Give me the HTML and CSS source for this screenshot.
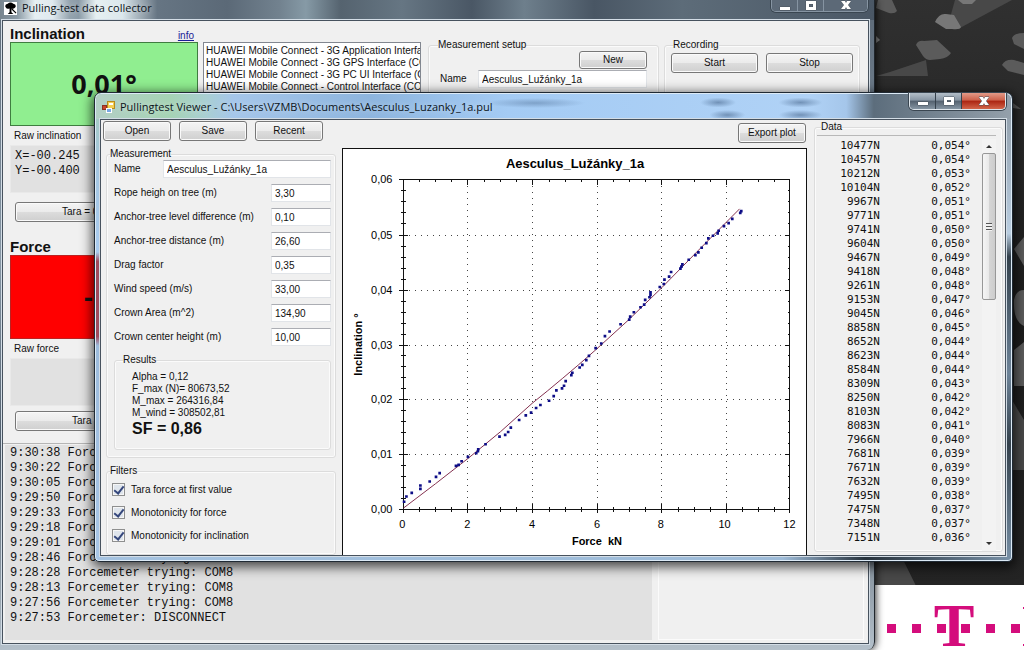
FILE: index.html
```html
<!DOCTYPE html>
<html lang="en">
<head>
<meta charset="utf-8">
<title>Pullingtest Viewer</title>
<link rel="stylesheet" href="styles.css">
</head>
<body>
<main class="desktop">
  <svg class="wallpaper" viewBox="864 0 160 650" preserveAspectRatio="xMaxYMin slice" aria-hidden="true">
    <defs><linearGradient id="night" x1="0" y1="0" x2="0" y2="1"><stop offset="0" stop-color="#303030"/><stop offset=".5" stop-color="#1c1c1c"/><stop offset=".9" stop-color="#242424"/></linearGradient></defs>
    <rect x="864" width="160" height="650" fill="url(#night)"/>
    <g fill="#484848"><path d="M950 18L955 0H1012L958 29zM890 72L926 60L928 76H876zM864 480L917 588H864zM1012 400L1024 420V470H1008z"/></g>
    <g fill="#5b5b5b">
      <path d="M878 0H892L897 11Q895 14 889 13L876 8zM916 45Q918 40 924 41L937 40L951 53Q948 58 940 59L930 60Q926 60 923 56zM1012 38Q1014 33 1024 33V49L1014 44zM1002 65Q1005 59 1014 60L1024 63V75L1008 71zM1013 103L1021 109L1013 108zM1014 249L1024 237V266zM1014 300Q1016 290 1024 290V326Q1013 321 1014 300zM1014 350L1024 342V386H1014z"/>
      <path fill="#777" d="M935 22Q939 13 946 14L954 15L961 27Q960 30 952 29L946 29zM958 0H976L972 4H963zM876 36L880 40L876 43z"/>
    </g>
    <rect x="864" y="585" width="160" height="65" fill="#fff"/>
    <g fill="#d40d7c"><path d="M887 624h9v9h-9zM912 624h9v9h-9zM937 624h9v9h-9zM961 624h9v9h-9zM986 624h9v9h-9zM1011 624h9v9h-9z"/>
    <text class="brand" x="954" y="646" text-anchor="middle">T</text><path d="M1023 607h1v2h-1zM1023 644h1v2h-1z"/></g>
  </svg>

  <section class="window collector" aria-label="Pulling-test data collector">
    <header class="titlebar">
      <svg class="appicon" viewBox="0 0 14 14" aria-hidden="true"><rect width="14" height="14" fill="#fff"/><path fill="#000" d="M2 6Q0 3 4 2Q7-1 10 2Q14 3 12 6Q10 8 8 7V11L10 13H4L6 11V7Q3 8 2 6z"/><path d="M8 7L13 12" stroke="#000" stroke-width="1.2"/></svg>
      <h1 class="caption">Pulling-test data collector</h1>
      <div class="winbuttons dim">
        <button aria-label="Minimize"><svg viewBox="0 0 14 12"><path class="glyph" d="M2 7h10v3H2z"/></svg></button>
        <button aria-label="Maximize"><svg viewBox="0 0 14 12"><path class="glyph" fill-rule="evenodd" d="M2 1h10v9H2zM5 4v3h4V4z"/></svg></button>
        <button class="wide" aria-label="Close"><svg viewBox="0 0 14 12"><path class="glyph" d="M2 1h4l1 2 1-2h4L9 5l3 4H8L7 7l-1 2H2l3-4z"/></svg></button>
      </div>
    </header>
    <div class="client">
      <div class="upper">
        <div class="sensors">
          <div class="sensorhead"><h2>Inclination</h2><a href="#info">info</a></div>
          <output class="reading ok">0,01°</output>
          <p class="rawlabel">Raw inclination</p>
          <pre class="raw">X=-00.245
Y=-00.400</pre>
          <button class="btn tara">Tara = 0</button>
          <div class="sensorhead second"><h2>Force</h2></div>
          <output class="reading bad">- - -</output>
          <p class="rawlabel">Raw force</p>
          <pre class="raw"></pre>
          <button class="btn tara force">Tara = 0</button>
        </div>
        <ul class="ports">
          <li>HUAWEI Mobile Connect - 3G Application Interface</li>
          <li>HUAWEI Mobile Connect - 3G GPS Interface (COM5)</li>
          <li>HUAWEI Mobile Connect - 3G PC UI Interface (COM6)</li>
          <li>HUAWEI Mobile Connect - Control Interface (COM7)</li>
        </ul>
        <fieldset class="setup"><legend>Measurement setup</legend>
          <button class="btn new">New</button>
          <div class="namerow"><label for="setupname">Name</label><input id="setupname" value="Aesculus_Lužánky_1a"></div>
        </fieldset>
        <fieldset class="recording"><legend>Recording</legend>
          <div class="pair"><button class="btn">Start</button><button class="btn">Stop</button></div>
        </fieldset>
      </div>
      <div class="lower">
        <pre class="log">9:30:38 Forcemeter trying: COM8
9:30:22 Forcemeter trying: COM8
9:30:05 Forcemeter trying: COM8
9:29:50 Forcemeter trying: COM8
9:29:33 Forcemeter trying: COM8
9:29:18 Forcemeter trying: COM8
9:29:01 Forcemeter trying: COM8
9:28:46 Forcemeter trying: COM8
9:28:28 Forcemeter trying: COM8
9:28:13 Forcemeter trying: COM8
9:27:56 Forcemeter trying: COM8
9:27:53 Forcemeter: DISCONNECT</pre>
        <div class="side"></div>
      </div>
    </div>
  </section>

  <section class="window viewer" aria-label="Pullingtest Viewer">
    <header class="titlebar">
      <svg class="appicon" viewBox="0 0 13 13" aria-hidden="true"><rect x="5.500" y="1.500" width="7" height="7" fill="#f5cf52" stroke="#b88a1c"/><path fill="#fff" d="M7 3h4v2H7z"/><rect x=".5" y="5.500" width="4" height="4" fill="#c8442c" stroke="#8c3022"/><rect x="4.500" y="8.500" width="5" height="4" fill="#78a7e4" stroke="#fff"/></svg>
      <h1 class="caption">Pullingtest Viewer - C:\Users\VZMB\Documents\Aesculus_Luzanky_1a.pul</h1>
      <div class="winbuttons">
        <button aria-label="Minimize"><svg viewBox="0 0 14 12"><path class="glyph" d="M2 7h10v3H2z"/></svg></button>
        <button aria-label="Maximize"><svg viewBox="0 0 14 12"><path class="glyph" fill-rule="evenodd" d="M2 2h10v8H2zM5 5v2h4V5z"/></svg></button>
        <button class="wide close" aria-label="Close"><svg viewBox="0 0 14 12"><path class="glyph" d="M2 2h4l1 2 1-2h4L9 6l3 4H8L7 8l-1 2H2l3-4z"/></svg></button>
      </div>
    </header>
    <div class="client body">
      <div class="toolbar">
        <button class="btn">Open</button><button class="btn">Save</button><button class="btn">Recent</button>
        <button class="btn export">Export plot</button>
      </div>
      <form class="params">
        <fieldset class="measurement"><legend>Measurement</legend>
          <div class="field name"><label for="name">Name</label><input id="name" value="Aesculus_Lužánky_1a"></div>
          <div class="field"><label for="rope">Rope heigh on tree (m)</label><input id="rope" value="3,30"></div>
          <div class="field"><label for="level">Anchor-tree level difference (m)</label><input id="level" value="0,10"></div>
          <div class="field"><label for="dist">Anchor-tree distance (m)</label><input id="dist" value="26,60"></div>
          <div class="field"><label for="drag">Drag factor</label><input id="drag" value="0,35"></div>
          <div class="field"><label for="wind">Wind speed (m/s)</label><input id="wind" value="33,00"></div>
          <div class="field"><label for="area">Crown Area (m^2)</label><input id="area" value="134,90"></div>
          <div class="field"><label for="height">Crown center height (m)</label><input id="height" value="10,00"></div>
          <fieldset class="results"><legend>Results</legend>
            <p>Alpha = 0,12</p><p>F_max (N)= 80673,52</p><p>M_max = 264316,84</p><p>M_wind = 308502,81</p>
            <p class="sf">SF = 0,86</p>
          </fieldset>
        </fieldset>
        <fieldset class="filters"><legend>Filters</legend>
          <label><input type="checkbox" checked>Tara force at first value</label>
          <label><input type="checkbox" checked>Monotonicity for force</label>
          <label><input type="checkbox" checked>Monotonicity for inclination</label>
        </fieldset>
      </form>
      <figure class="plot">
        <svg viewBox="343 148 463 407" preserveAspectRatio="xMidYMin meet" role="img" aria-label="Inclination against force">
          <g class="grid"><path d="M467.500 179V509M532.500 179V509M597.500 179V509M661.500 179V509M726.500 179V509"/><path d="M403 234.500H790M403 289.500H790M403 344.500H790M403 399.500H790M403 454.500H790"/></g>
          <g class="axis">
            <rect x="403.500" y="178.500" width="387" height="331"/>
            <path d="M399 178.500h9M399 234.500h9M399 289.500h9M399 344.500h9M399 399.500h9M399 454.500h9M399 509.500h9M467.500 504v9M532.500 504v9M597.500 504v9M661.500 504v9M726.500 504v9M403.500 504v9M790.500 504v9M467.500 179v5M532.500 179v5M597.500 179v5M661.500 179v5M726.500 179v5M786 234.500h5M786 289.500h5M786 344.500h5M786 399.500h5M786 454.500h5"/>
            <path d="M401 189.500h5M401 200.500h5M401 211.500h5M401 222.500h5M401 245.500h5M401 256.500h5M401 267.500h5M401 278.500h5M401 300.500h5M401 311.500h5M401 322.500h5M401 333.500h5M401 355.500h5M401 366.500h5M401 377.500h5M401 388.500h5M401 410.500h5M401 421.500h5M401 432.500h5M401 443.500h5M401 465.500h5M401 476.500h5M401 487.500h5M401 498.500h5"/>
            <path d="M789 189.500h2M789 200.500h2M789 211.500h2M789 222.500h2M789 245.500h2M789 256.500h2M789 267.500h2M789 278.500h2M789 300.500h2M789 311.500h2M789 322.500h2M789 333.500h2M789 355.500h2M789 366.500h2M789 377.500h2M789 388.500h2M789 410.500h2M789 421.500h2M789 432.500h2M789 443.500h2M789 465.500h2M789 476.500h2M789 487.500h2M789 498.500h2"/>
            <path d="M419.500 507v5M435.500 507v5M451.500 507v5M484.500 507v5M500.500 507v5M516.500 507v5M549.500 507v5M565.500 507v5M581.500 507v5M613.500 507v5M629.500 507v5M645.500 507v5M678.500 507v5M694.500 507v5M710.500 507v5M742.500 507v5M758.500 507v5M774.500 507v5"/>
            <path d="M419.500 179v2M435.500 179v2M451.500 179v2M484.500 179v2M500.500 179v2M516.500 179v2M549.500 179v2M565.500 179v2M581.500 179v2M613.500 179v2M629.500 179v2M645.500 179v2M678.500 179v2M694.500 179v2M710.500 179v2M742.500 179v2M758.500 179v2M774.500 179v2"/>
          </g>
          <path class="fit" d="M403 508Q435 484 468 458T532 403Q562 379 595 350T662 287Q700 248 740 208"/>
          <g class="dots">
            <path transform="translate(340 350) scale(.3333)" d="M191 455h.1M198 439h.1M214 428h.1M240 406h.1M240 416h.1M268 394h.1M287 380h.1M298 369h.1M347 347h.1M355 344h.1M364 333h.1M383 320h.1M408 309h.1M413 303h.1M414 297h.1M436 282h.1M478 259h.1M495 254h.1M504 245h.1M512 232h.1M537 209h.1M557 195h.1M573 187h.1M588 173h.1M601 164h.1M627 151h.1M641 137h.1M649 120h.1M666 114h.1M672 106h.1M677 92h.1M694 74h.1M697 67h.1M719 51h.1M727 43h.1M739 29h.1M747 16h.1"/>
            <path transform="translate(570 140) scale(.3333)" d="M77 623h.1M94 609h.1M105 587h.1M119 573h.1M152 551h.1M178 537h.1M181 528h.1M192 515h.1M212 500h.1M223 492h.1M226 478h.1M239 470h.1M242 463h.1M242 455h.1M270 439h.1M282 430h.1M284 417h.1M298 408h.1M304 394h.1M332 384h.1M335 378h.1M338 371h.1M357 357h.1M377 343h.1M386 335h.1M396 321h.1M410 307h.1M416 293h.1M430 285h.1M444 278h.1M447 270h.1M463 256h.1M477 247h.1M488 234h.1M512 216h.1M515 211h.1"/>
          </g>
          <g class="ticks end"><text x="392" y="182">0,06</text><text x="392" y="238">0,05</text><text x="392" y="293">0,04</text><text x="392" y="348">0,03</text><text x="392" y="403">0,02</text><text x="392" y="458">0,01</text><text x="392" y="513">0,00</text></g>
          <g class="ticks mid"><text x="402" y="528">0</text><text x="467" y="528">2</text><text x="532" y="528">4</text><text x="597" y="528">6</text><text x="661" y="528">8</text><text x="725" y="528">10</text><text x="790" y="528">12</text></g>
          <text class="plottitle" x="575" y="167">Aesculus_Lužánky_1a</text>
          <text class="axistitle" x="597" y="545" xml:space="preserve">Force  kN</text>
          <text class="axistitle" transform="translate(361 344) rotate(-90)">Inclination °</text>
        </svg>
      </figure>
      <fieldset class="data"><legend>Data</legend>
        <div class="list">
          <table>
            <tr><td>10477N</td><td>0,054°</td></tr><tr><td>10457N</td><td>0,054°</td></tr><tr><td>10212N</td><td>0,053°</td></tr><tr><td>10104N</td><td>0,052°</td></tr><tr><td>9967N</td><td>0,051°</td></tr><tr><td>9771N</td><td>0,051°</td></tr><tr><td>9741N</td><td>0,050°</td></tr><tr><td>9604N</td><td>0,050°</td></tr><tr><td>9467N</td><td>0,049°</td></tr><tr><td>9418N</td><td>0,048°</td></tr><tr><td>9261N</td><td>0,048°</td></tr><tr><td>9153N</td><td>0,047°</td></tr><tr><td>9045N</td><td>0,046°</td></tr><tr><td>8858N</td><td>0,045°</td></tr><tr><td>8652N</td><td>0,044°</td></tr><tr><td>8623N</td><td>0,044°</td></tr><tr><td>8584N</td><td>0,044°</td></tr><tr><td>8309N</td><td>0,043°</td></tr><tr><td>8250N</td><td>0,042°</td></tr><tr><td>8103N</td><td>0,042°</td></tr><tr><td>8083N</td><td>0,041°</td></tr><tr><td>7966N</td><td>0,040°</td></tr><tr><td>7681N</td><td>0,039°</td></tr><tr><td>7671N</td><td>0,039°</td></tr><tr><td>7632N</td><td>0,039°</td></tr><tr><td>7495N</td><td>0,038°</td></tr><tr><td>7475N</td><td>0,037°</td></tr><tr><td>7348N</td><td>0,037°</td></tr><tr><td>7151N</td><td>0,036°</td></tr>
          </table>
          <div class="scroll" aria-hidden="true">
            <svg class="arrow" viewBox="0 0 14 14"><path d="M4 9L7 6L10 9z"/></svg>
            <div class="thumb"><i></i></div>
            <svg class="arrow" viewBox="0 0 14 14"><path d="M4 5L7 8L10 5z"/></svg>
          </div>
        </div>
      </fieldset>
    </div>
  </section>
</main>
</body>
</html>
```
FILE: styles.css
```css
* { box-sizing: border-box; }
body { margin: 0; font: 10px/12px "Liberation Sans", Arial, sans-serif; color: #111; }
h1, h2, p, pre, figure, ul { margin: 0; padding: 0; }
button, input { font: inherit; color: inherit; }
.desktop { position: relative; min-height: 100vh; overflow: hidden; background: #222; }
.wallpaper { position: absolute; top: 0; right: 0; width: 160px; height: 100%; }
.brand { font: bold 61px "Liberation Serif", serif; }

.window { position: absolute; display: flex; flex-direction: column; }
.titlebar { display: flex; align-items: center; flex: none; }
.caption { flex: 1; font: 11px/16px "Open Sans", "Noto Sans", sans-serif; color: #0c1420; text-shadow: 0 0 6px #ffffff90; }
.appicon { width: 13px; height: 13px; margin-right: 5px; }
.client { flex: 1; min-height: 0; background: #f0f0f0; border: 1px solid #47525e; outline: 1px solid #d3dde6; }

.winbuttons { display: flex; align-self: flex-start; border: 1px solid #dfe6ec; border-top: 0; border-radius: 0 0 5px 5px; overflow: hidden; box-shadow: 0 0 0 1px #3a4651; }
.winbuttons button { display: grid; place-items: center; width: 26px; height: 16px; padding: 0; border: 0; border-right: 1px solid #35414c; background: linear-gradient(#b3bec8, #8795a3 45%, #53616f 50%, #8595a3); }
.winbuttons .wide { width: 43px; border-right: 0; }
.winbuttons .close { background: linear-gradient(#e29a88, #cc604a 45%, #ab2411 50%, #d2654a); }
.winbuttons svg { width: 14px; height: 12px; }
.glyph { fill: #fff; stroke: #4b555f; stroke-width: 1; paint-order: stroke; }
.winbuttons.dim { border-color: #8694a2; }
.winbuttons.dim button { height: 11px; background: #5c6977; border-color: #8694a2; }

.btn { height: 20px; padding: 0 4px; border: 1px solid #777; border-radius: 3px; background: linear-gradient(#f4f4f4, #ebebeb 48%, #dcdcdc 52%, #cfcfcf); box-shadow: inset 0 0 0 1px #fafafa; line-height: 16px; }
fieldset { min-width: 0; margin: 0; padding: 0; border: 1px solid #dcdcdc; border-radius: 3px; box-shadow: inset 0 0 0 1px #fbfbfb; }
legend { height: 12px; margin-left: 4px; padding: 0; background: #f0f0f0; }
input:not([type]) { min-width: 0; height: 18px; padding: 0 3px; border: 1px solid #e1e4e8; border-top-color: #abadb3; background: #fff; }

.collector { left: 0; top: 0; right: 149px; bottom: 0; padding: 0 5px 6px 2px; border-right: 1px solid #20262c; border-radius: 0 0 8px 0; background: linear-gradient(#5c6977, #8797a5 40%, #4c5967 70%, #b4c0ca); box-shadow: 0 0 8px #000; }
.collector > .titlebar { height: 20px; margin: 0 -5px 0 -2px; padding: 0 6px 4px 4px; background: linear-gradient(90deg, #77858f, #8c9ba6 2%, #e6eff3 4%, #dfe9ee 6%, #94a3ae 8%, #8b9ba7 9%, #e6f0f2 11%, #dbe7ec 14%, #667583 18%, #5b6977 26%, #72828f 32%, #869aa6 35%, #55636f 39%, #667683 46%, #4a5765 54%, #6e7f8c 60%, #495664 68%, #5d6c79 78%, #4a5765); }
.collector > .client { display: flex; flex-direction: column; }
.upper { display: flex; flex: none; height: 422px; padding: 4px 8px 0 7px; gap: 5px; }
.sensors { display: flex; flex-direction: column; width: 188px; flex: none; }
.sensorhead { display: flex; justify-content: space-between; align-items: flex-end; height: 17px; padding-right: 4px; }
.sensorhead.second { margin-top: 16px; }
h2 { font: bold 15px/17px "Liberation Sans", Arial, sans-serif; }
a { color: #1c1c96; }
.reading { display: grid; place-items: center; height: 84px; border: 1px solid #3f7d40; font: bold 27px/30px "Open Sans", sans-serif; }
.ok { background: #90ee90; }
.bad { background: #f00; border-color: #b22; }
.rawlabel { height: 19px; padding: 4px 4px 0; }
.raw { height: 48px; padding: 3px 4px; background: #e1e1e1; border: 1px solid #e9e9e9; font: 12px/15px "Liberation Mono", monospace; }
.tara { flex: none; margin: 9px 8px 0 5px; padding-left: 46px; text-align: left; }
.tara.force { margin-top: 5px; padding-left: 56px; }
.ports { width: 218px; height: 160px; flex: none; margin-top: 17px; padding: 2px; border: 1px solid #828790; background: #fff; list-style: none; white-space: nowrap; overflow: hidden; }
.setup { width: 231px; height: 190px; margin: 14px 0 0 2px; padding: 0 11px; }
.recording { flex: 1; height: 190px; margin-top: 14px; padding: 2px 6px; }
.setup legend { margin-left: -2px; }
.recording legend { margin-left: 2px; }
.new { display: block; width: 68px; height: 18px; margin-left: auto; line-height: 14px; }
.namerow { display: flex; align-items: center; margin-top: 1px; }
.namerow label { width: 38px; }
.namerow input { flex: 1; }
.pair { display: grid; grid-template-columns: 1fr 1fr; gap: 8px; }
.lower { display: flex; flex: 1; min-height: 0; gap: 6px; padding: 1px 4px 3px 2px; border-top: 1px solid #b5b5b5; }
.log { flex: 1; padding: 1px 5px; background: #e1e1e1; font: 12px/15px "Liberation Mono", monospace; overflow: hidden; }
.side { width: 206px; border: 1px solid #fbfbfb; }

.viewer { left: 94px; top: 92px; right: 11px; bottom: 88px; padding: 0 6px 5px 5px; border: 1px solid #202a34; border-radius: 7px 7px 5px 5px; background: linear-gradient(#a8cdb8, #a4c6e0 15%, #a9cbef 34%, #a04a5c 36%, #a04a5c 52%, #9cbbdc 54%, #a9c6e6) left / 5px 100% no-repeat, linear-gradient(#8e9aa5, #b9cde0 30%, #34414c 35%, #6e8499 60%, #34414c 75%, #7890a6) right / 6px 100% no-repeat, linear-gradient(90deg, #a4c2e0, #9dbbd8 75%, #27323c 84%, #7890a6); box-shadow: inset 0 0 0 1px #dceaf6, 0 3px 12px 2px #000000b0; }
.viewer > .titlebar { height: 25px; margin: 1px -5px 0 -4px; padding: 0 5px 0 6px; border-radius: 6px 6px 0 0; background: radial-gradient(18px 5px at 68% 34%, #4d6c92a0, transparent), radial-gradient(18px 5px at 69% 84%, #4d6c92a0, transparent), radial-gradient(22px 5px at 77% 34%, #4d6c92a0, transparent), radial-gradient(22px 5px at 77% 84%, #4d6c92a0, transparent), radial-gradient(50px 5px at 48% 36%, #4d6c9270, transparent), linear-gradient(90deg, #b4cfc6, #a5d3b4 8%, #a9cfd2 12%, #a5c6ea 15%, #8db5de 30%, #a4cbf4 45%, #b0d2f6 78%, #a5c6ea 82%, #5c6d7c 85%, #94a0ab); }
.viewer .winbuttons { margin-top: -1px; }
.body { display: grid; grid-template: 28px 1fr / 241px minmax(0, 1fr) 198px; }
.toolbar { grid-column: 1 / 3; display: flex; align-items: flex-start; gap: 8px; padding: 1px 1px 0 2px; }
.toolbar .btn { width: 68px; }
.toolbar .export { margin: 2px 0 0 auto; }
.params { display: flex; flex-direction: column; padding: 0 6px 0 5px; gap: 7px; }
.measurement { height: 310px; padding: 0 4px 0 7px; }
.measurement > legend { margin-left: -4px; }
.field { display: flex; justify-content: space-between; align-items: center; height: 18px; margin-bottom: 6px; }
.field input { width: 60px; }
.field.name input { width: 168px; }
.results { height: 96px; margin-top: 8px; padding: 5px 17px; }
.results legend { margin-left: -9px; }
.sf { font: bold 16px/19px "Liberation Sans", Arial, sans-serif; }
.filters { flex: 1; padding: 1px 5px; }
.filters legend { margin-left: -2px; }
.filters label { display: flex; align-items: center; height: 23px; }
.filters input { appearance: none; width: 13px; height: 13px; margin: 0 6px 0 0; border: 1px solid #8e8f8f; background: #dfe5ec; box-shadow: inset 0 0 0 1px #f6f6f6; display: grid; place-items: center; }
.filters input:checked::after { content: ""; width: 4px; height: 8px; margin-bottom: 2px; border: solid #35477c; border-width: 0 2px 2px 0; transform: rotate(38deg); }

.plot { min-width: 0; min-height: 0; overflow: hidden; background: #fff; border: 1px solid #111; border-bottom: 0; }
.plot svg { display: block; width: 100%; height: 100%; }
.grid { stroke: #444; stroke-dasharray: 1 5; shape-rendering: crispEdges; }
.axis { fill: none; stroke: #111; shape-rendering: crispEdges; }
.fit { fill: none; stroke: #84304f; stroke-width: 1; }
.dots { fill: none; stroke: #0d0d86; stroke-width: 8; stroke-linecap: square; }
.ticks { font-size: 11px; }
.end { text-anchor: end; }
.mid { text-anchor: middle; }
.plottitle { font-size: 13px; font-weight: bold; text-anchor: middle; }
.axistitle { font-size: 11px; font-weight: bold; text-anchor: middle; }

.data { grid-area: 1 / 3 / 3 / 4; display: flex; flex-direction: column; margin: 1px 2px 3px 7px; }
.data legend { margin-left: 6px; }
.list { display: flex; flex: 1; min-height: 0; margin: 2px 6px 0 2px; padding-top: 3px; border-top: 1px solid #b8b8b8; }
table { flex: 1; align-self: flex-start; border-collapse: collapse; table-layout: fixed; font: 11px/14px "DejaVu Sans Mono", monospace; }
tr { height: 14px; }
td { padding: 0; text-align: right; }
td:first-child { width: 63px; }
td:last-child { padding-right: 11px; }
.scroll { display: flex; flex-direction: column; width: 14px; background: #f3f3f3; }
.arrow { width: 14px; height: 14px; fill: #333; }
.thumb { display: grid; place-items: center; height: 147px; margin-bottom: auto; border: 1px solid #979797; border-radius: 2px; background: linear-gradient(90deg, #f5f5f5, #e9e9e9 48%, #d5d5d5 52%, #ccc); }
.thumb i { width: 6px; height: 8px; background: repeating-linear-gradient(#555 0 1px, #f2f2f2 1px 3px); }
```
